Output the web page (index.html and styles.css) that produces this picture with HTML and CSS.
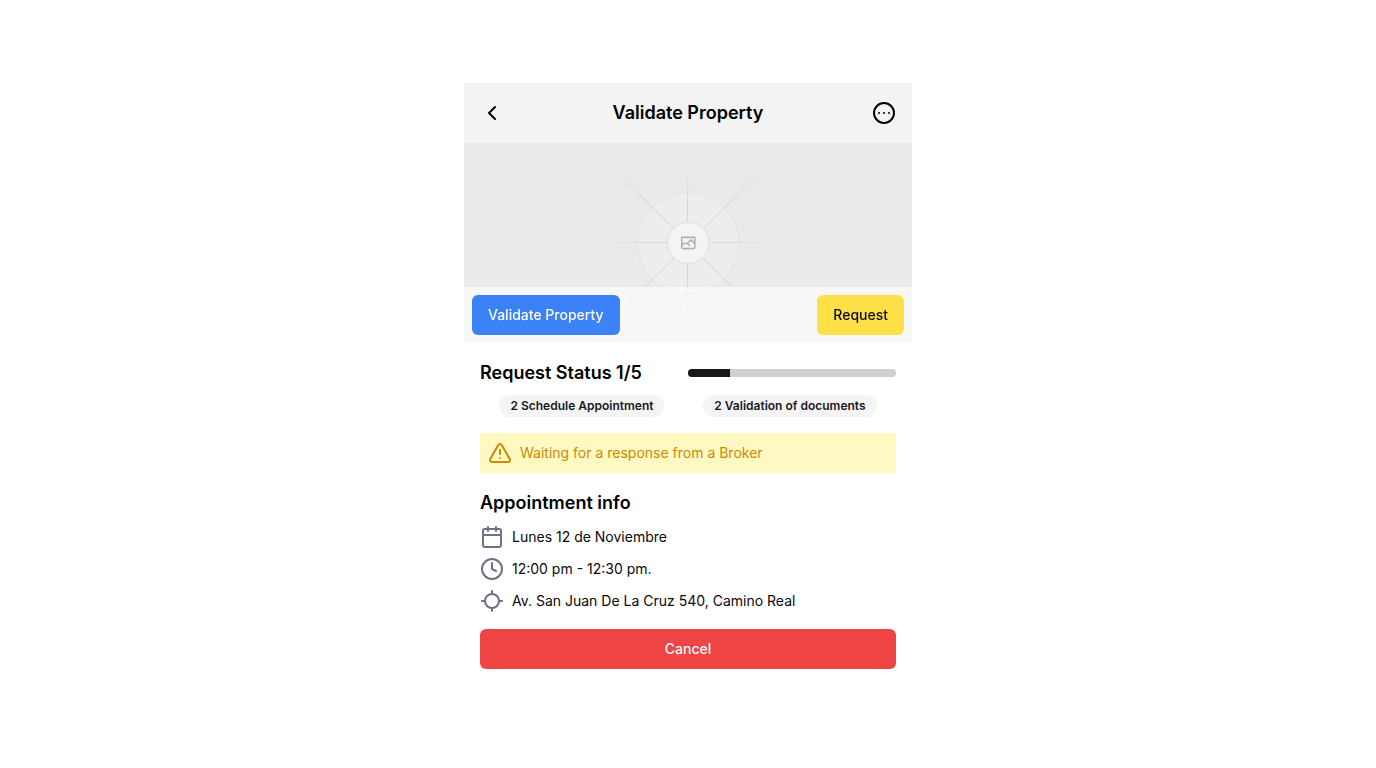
FILE: index.html
```html
<!DOCTYPE html>
<html lang="en">
<head>
<meta charset="utf-8">
<meta name="viewport" content="width=device-width, initial-scale=1">
<title>Validate Property</title>
<link rel="stylesheet" href="styles.css">
</head>
<body>
<main class="card">
  <header class="topbar">
    <button class="icon-button" type="button" aria-label="Back">
      <svg class="icon" viewBox="0 0 24 24"><path d="m15 18-6-6 6-6"/></svg>
    </button>
    <h1 class="heading">Validate Property</h1>
    <button class="icon-button" type="button" aria-label="More options">
      <svg class="icon" viewBox="0 0 24 24"><circle cx="12" cy="12" r="10"/><path d="M17 12h.01M12 12h.01M7 12h.01"/></svg>
    </button>
  </header>

  <section class="media">
    <svg class="photo" viewBox="0 0 1200 1200" preserveAspectRatio="xMidYMid slice" fill="none" role="img" aria-label="Property photo">
      <defs>
        <linearGradient id="ray" gradientUnits="userSpaceOnUse" x1="404" y1="0" x2="796" y2="0">
          <stop stop-color="#bdbdbd" stop-opacity="0"/>
          <stop offset=".208" stop-color="#bdbdbd"/>
          <stop offset=".792" stop-color="#bdbdbd"/>
          <stop offset="1" stop-color="#bdbdbd" stop-opacity="0"/>
        </linearGradient>
        <linearGradient id="ray-long" gradientUnits="userSpaceOnUse" x1="323" y1="0" x2="877" y2="0">
          <stop stop-color="#bdbdbd" stop-opacity="0"/>
          <stop offset=".208" stop-color="#bdbdbd"/>
          <stop offset=".792" stop-color="#bdbdbd"/>
          <stop offset="1" stop-color="#bdbdbd" stop-opacity="0"/>
        </linearGradient>
      </defs>
      <rect width="1200" height="1200" fill="#eaeaea"/>
      <g opacity=".5">
        <circle cx="600.7" cy="599.9" r="136" fill="#fafafa" stroke="#c9c9c9" stroke-width="2.4" opacity=".5"/>
        <rect x="404" y="597.4" width="392" height="2.6" fill="url(#ray)"/>
        <rect x="404" y="600" width="392" height="2.6" fill="url(#ray)" transform="rotate(90 600 600)"/>
        <rect x="323" y="598.8" width="554" height="2.4" fill="url(#ray-long)" transform="rotate(45 600 600)"/>
        <rect x="323" y="598.8" width="554" height="2.4" fill="url(#ray-long)" transform="translate(3 0) rotate(-45 600 600)"/>
        <circle cx="600.7" cy="599.9" r="56" fill="#fff" stroke="#c9c9c9" stroke-width="2.4"/>
        <path fill="#666" fill-rule="evenodd" clip-rule="evenodd" d="M616.426 586.58h-31.434v16.176l3.553-3.554.531-.531h9.068l.074-.074 8.463-8.463h2.565l7.18 7.181V586.58Zm-15.715 14.654 3.698 3.699 1.283 1.282-2.565 2.565-1.282-1.283-5.2-5.199h-6.066l-5.514 5.514-.073.073v2.876a2.418 2.418 0 0 0 2.418 2.418h26.598a2.418 2.418 0 0 0 2.418-2.418v-8.317l-8.463-8.463-7.181 7.181-.071.072Zm-19.347 5.442v4.085a6.045 6.045 0 0 0 6.046 6.045h26.598a6.044 6.044 0 0 0 6.045-6.045v-7.108l1.356-1.355-1.282-1.283-.074-.073v-17.989h-38.689v23.43l-.146.146.146.147Z"/>
      </g>
    </svg>
    <div class="media-actions">
      <button class="button button-blue" type="button">Validate Property</button>
      <button class="button button-yellow" type="button">Request</button>
    </div>
  </section>

  <div class="content">
    <section class="status">
      <div class="status-row">
        <h2 class="heading" id="status-label">Request Status 1/5</h2>
        <div class="progress" role="progressbar" aria-labelledby="status-label" aria-valuemin="0" aria-valuemax="5" aria-valuenow="1">
          <div class="progress-fill" style="width: 20%"></div>
        </div>
      </div>
      <div class="badges">
        <span class="badge">2 Schedule Appointment</span>
        <span class="badge">2 Validation of documents</span>
      </div>
    </section>

    <div class="notice" role="status">
      <svg class="icon" viewBox="0 0 24 24" aria-hidden="true"><path d="m21.73 18-8-14a2 2 0 0 0-3.48 0l-8 14A2 2 0 0 0 4 21h16a2 2 0 0 0 1.73-3Z"/><path d="M12 9v4M12 17h.01"/></svg>
      <span>Waiting for a response from a Broker</span>
    </div>

    <section class="info">
      <h2 class="heading">Appointment info</h2>
      <ul class="info-list">
        <li class="info-item">
          <svg class="icon" viewBox="0 0 24 24" aria-hidden="true"><rect width="18" height="18" x="3" y="4" rx="2"/><path d="M16 2v4M8 2v4M3 10h18"/></svg>
          <span>Lunes 12 de Noviembre</span>
        </li>
        <li class="info-item">
          <svg class="icon" viewBox="0 0 24 24" aria-hidden="true"><circle cx="12" cy="12" r="10"/><path d="M12 6v6l4 2"/></svg>
          <span>12:00 pm - 12:30 pm.</span>
        </li>
        <li class="info-item">
          <svg class="icon" viewBox="0 0 24 24" aria-hidden="true"><path d="M2 12h3M19 12h3M12 2v3M12 19v3"/><circle cx="12" cy="12" r="7"/></svg>
          <span>Av. San Juan De La Cruz 540, Camino Real</span>
        </li>
      </ul>
    </section>

    <button class="button button-red" type="button">Cancel</button>
  </div>
</main>
</body>
</html>
```

FILE: styles.css
```css
*, *::before, *::after {
  box-sizing: border-box;
}

body {
  margin: 0;
  min-height: 100vh;
  display: flex;
  align-items: center;
  justify-content: center;
  background: #fff;
  color: #09090b;
  font: 14px/20px Inter, "Liberation Sans", sans-serif;
}

.card {
  width: 100%;
  max-width: 448px;
}

.heading {
  margin: 0;
  color: #000;
  font-size: 18px;
  line-height: 28px;
  font-weight: 600;
}

.icon {
  display: block;
  flex: none;
  width: 24px;
  height: 24px;
  fill: none;
  stroke: currentColor;
  stroke-width: 2;
  stroke-linecap: round;
  stroke-linejoin: round;
}

.topbar {
  display: flex;
  align-items: center;
  justify-content: space-between;
  padding: 16px;
  background: #f3f3f3;
}

.icon-button {
  padding: 0;
  border: 0;
  background: none;
  color: #000;
  cursor: pointer;
}

.media {
  position: relative;
}

.photo {
  display: block;
  width: 100%;
  height: 200px;
}

.media-actions {
  position: absolute;
  inset: auto 0 0;
  display: flex;
  justify-content: space-between;
  padding: 8px;
  background: rgb(255 255 255 / 65%);
}

.button {
  padding: 10px 16px;
  border: 0;
  border-radius: 6px;
  font: inherit;
  font-weight: 500;
  cursor: pointer;
}

.button-blue {
  background: #3b82f6;
  color: #fafafa;
}

.button-yellow {
  background: #fde047;
  color: #09090b;
}

.button-red {
  background: #ef4444;
  color: #fafafa;
}

.content {
  display: flex;
  flex-direction: column;
  gap: 16px;
  padding: 16px;
}

.status,
.info {
  display: flex;
  flex-direction: column;
  gap: 8px;
}

.status-row {
  display: grid;
  grid-template-columns: 1fr 1fr;
  align-items: center;
}

.progress {
  height: 8px;
  overflow: hidden;
  border-radius: 4px;
  background: #d0d0d0;
}

.progress-fill {
  height: 100%;
  background: #18181b;
}

.badges {
  display: flex;
  justify-content: space-around;
}

.badge {
  padding: 3px 11px;
  border-radius: 11px;
  background: #f4f4f5;
  color: #18181b;
  font-size: 12px;
  line-height: 16px;
  font-weight: 600;
}

.notice {
  display: flex;
  align-items: center;
  gap: 8px;
  padding: 8px;
  background: #fef9c3;
  color: #ca8a04;
}

.info-list {
  display: flex;
  flex-direction: column;
  gap: 8px;
  margin: 0;
  padding: 0;
  list-style: none;
}

.info-item {
  display: flex;
  align-items: center;
  gap: 8px;
}

.info-item .icon {
  color: #6b7280;
}
```
